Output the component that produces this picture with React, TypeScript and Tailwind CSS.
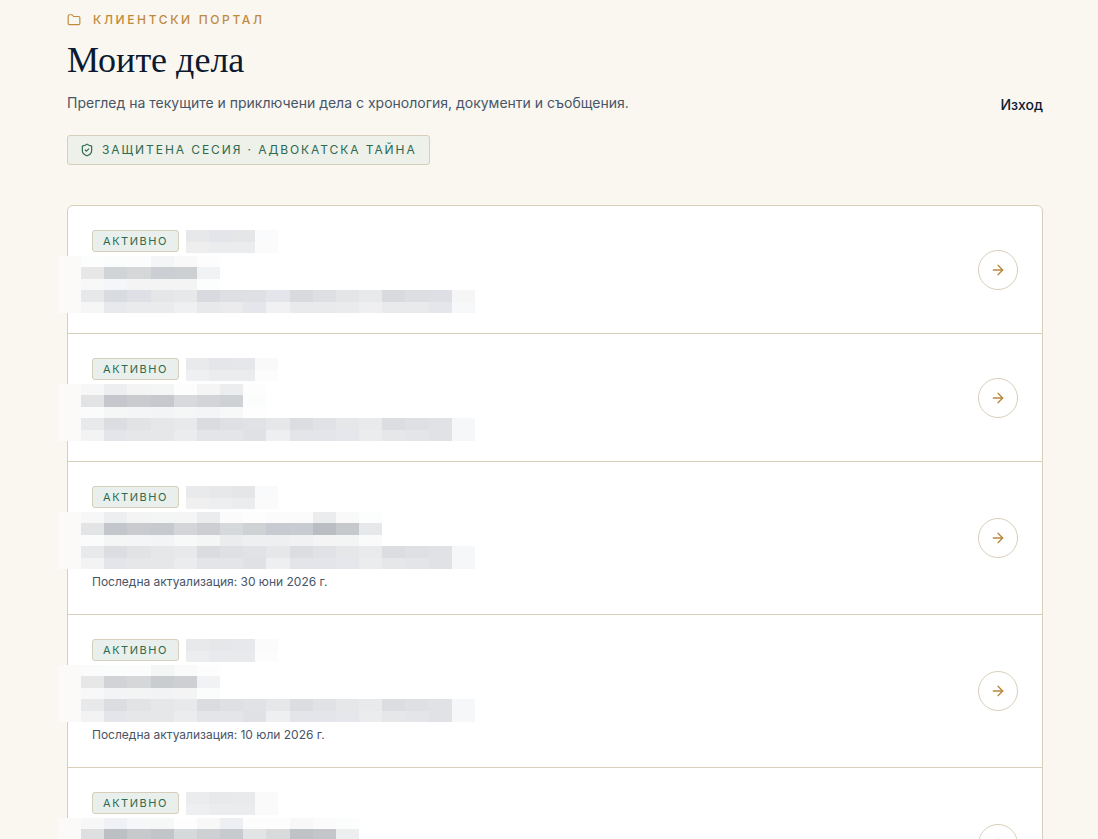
import { ArrowRight, Folder, ShieldCheck } from "lucide-react";

type CaseItem = {
  id: number;
  status: string;
  code: string[];
  title: string[];
  summary: string[];
  updated?: string;
};

// Each string is one row of mosaic cells, left to right.
const summaryRows = [
  "e8e9eb dcdde1 e2e3e5 e6e7e9 e8e9eb dbdce0 dfe0e4 e1e2e6 e6e7e9 dcdde1 e1e2e6 e6e7e8 e9eaec dcdde1 dfe0e4 e1e2e6 f6f7f9",
  "f3f3f3 e4e5ea e6e7e9 e6e7e9 ebecee e4e5e9 e4e5e9 e0e1e5 eeeff1 e4e5e9 e4e5ea e6e7ec ebecee e6e7e8 e4e5e9 e1e2e6 f6f7f9",
];

const cases: CaseItem[] = [
  {
    id: 1,
    status: "АКТИВНО",
    code: ["e7e8ea e4e5ea e5e6e8 fafbfd", "eeeeee ebecee ebecee fbfbfc"],
    title: [
      "fcfdfd fbfdfd fcfcfc f4f5f7 f9f9fa fdfdfd",
      "e7e7e7 d0d4d7 d6d7d9 cbced2 cdd0d3 f1f2f4",
      "f8f8f8 f4f6f9 f4f4f5 f4f4f4 f4f4f4 fcfefe",
    ],
    summary: [
      "e7e8ea d8dce0 dfe0e5 e5e6e8 e7e8ea d9dadf dedfe3 dfe0e4 e4e5ea d9dade dedfe3 e4e5e7 e8e9eb d9dade dddee2 dedfe4 f6f6f6",
      "f6f6f6 e8e9ec eaebed eaebed eff0f2 e8e9eb ebebed e5e6eb f1f1f3 e9eaeb e9eaeb eaebec efeff1 e9eaeb e9eaec e5e6eb f7f8fa",
    ],
  },
  {
    id: 2,
    status: "АКТИВНО",
    code: ["e9eaec e5e6ea e6e7eb f9f9f9", "eff0f2 ebecee ebecee fcfcfc"],
    title: [
      "f7f7f7 edeef0 f4f4f4 f4f6f6 fdfdfd f5f5f5 ecedef fdfdfe",
      "e2e3e5 c5c7cc cacbcf c6c8cd d8d9dd d3d4d8 cfd2d5 fafdfc",
      "fbfbfb f4f7f5 f4f5f7 f3f4f6 f5f7f6 f4f5f7 f7f9f8 fefefe",
    ],
    summary: summaryRows,
  },
  {
    id: 3,
    status: "АКТИВНО",
    code: ["e9eaeb e7e8e9 e5e6e8 f9fafc", "f0f0f0 edeeef ebecee fbfbfb"],
    title: [
      "f7f7f7 edeef0 f4f4f4 f4f6f5 f5f5f6 ebecee fbfbfb fdfdfd fbfbfb fbfbfb ebecee f9f9f9 fcfefe",
      "e2e4e5 c3c7cb cacbcf c6c9ce d4d5d9 cdced2 d5d9dc ced2d5 c7cad0 c8cbd1 babec3 c6c9cc e7e8ea",
      "fbfbfb f4f6f5 f4f5f7 f3f4f6 f7f9f8 f4f6f5 ebecee eeeff1 eeeff1 f1f1f3 f4f4f4 f3f5f4 fafafa",
    ],
    summary: summaryRows,
    updated: "Последна актуализация: 30 юни 2026 г.",
  },
  {
    id: 4,
    status: "АКТИВНО",
    code: ["e8e9eb e6e7e9 e7e8ec fbfbfb", "ecedef e9eaee e9eaec fcfcfc"],
    title: [
      "fbfbfc fafdfc fcfcfc f4f6f5 fafafb fdfdfd",
      "e7e7e7 d2d3d7 d6d7d9 cacdd0 cecfd3 f1f2f4",
      "f8f8f8 f3f4f6 f3f4f4 f2f3f5 f4f4f4 fbfdfd",
    ],
    summary: summaryRows,
    updated: "Последна актуализация: 10 юли 2026 г.",
  },
  {
    id: 5,
    status: "АКТИВНО",
    code: ["ebecee e8e9eb e9eaec fafafa", "eeeff1 ebecee ebecee fafafa"],
    title: [
      "f7f7f8 f0f1f4 f6f7f8 f6f8f7 fefefe f8f8f9 eeeff2 fdfdfd fdfdfe f8f8f9 fbfbfb fcfdfd",
      "dedfe1 bcbfc4 c8c9cd c1c4c9 d5d9dc cfd0d4 c7cacf e3e4e6 d9dadc bfc2c7 c4c6cb edeef0",
      "fbfbfb f4f6f5 f4f5f7 f3f4f6 f7f9f8 f4f6f5 ebecee eeeff1 f1f1f3 f4f4f4 f3f5f4 fafafa",
    ],
    summary: summaryRows,
    updated: "",
  },
];

function Cells({ row, total }: { row: string; total: number }) {
  const cells = row.split(" ");
  return (
    <>
      {Array.from({ length: total }, (_, i) => (
        <span key={i} style={{ backgroundColor: cells[i] ? `#${cells[i]}` : undefined }} />
      ))}
    </>
  );
}

function CaseCode({ rows }: { rows: string[] }) {
  return (
    <span aria-hidden className="grid h-[23px] w-[92px] grid-cols-4 grid-rows-2">
      {rows.map((row, i) => (
        <Cells key={i} row={row} total={4} />
      ))}
    </span>
  );
}

function CaseMosaic({ rows }: { rows: string[] }) {
  return (
    <div aria-hidden className="-mb-1 -ml-[34px] mt-1 flex h-[57px] w-[417px]">
      <span className="w-[23px] shrink-0 bg-[#fbfaf8]" />
      <div className="grid flex-1 grid-cols-17 grid-rows-5">
        {rows.map((row, i) => (
          <Cells key={i} row={row} total={17} />
        ))}
      </div>
    </div>
  );
}

function CaseRow({ item }: { item: CaseItem }) {
  return (
    <li className="border-b border-[#d8cfba] last:border-b-0">
      <a href={`#case-${item.id}`} className="flex items-center justify-between gap-6 p-6">
        <div className="min-w-0">
          <div className="flex h-[22px] items-start gap-[7px]">
            <span className="flex h-[22px] items-center rounded-[3px] border border-[#d8cfba] bg-[#e9efec] px-[10px] text-[11px] tracking-[0.14em] text-[#2d6a4f]">
              {item.status}
            </span>
            <CaseCode rows={item.code} />
          </div>
          <CaseMosaic rows={[...item.title, ...item.summary]} />
          {item.updated !== undefined && (
            <p className="mt-2 min-h-[17px] text-xs leading-[17px] text-[#475569]">
              {item.updated}
            </p>
          )}
        </div>
        <span className="flex size-10 shrink-0 items-center justify-center rounded-full border border-[#d8cfba] text-[#b8863b]">
          <ArrowRight size={16} strokeWidth={2} />
        </span>
      </a>
    </li>
  );
}

export default function App() {
  return (
    <main
      lang="bg"
      className="min-h-screen bg-[#faf7f0] pl-[67px] pr-[55px] pt-[10px] font-['Inter',sans-serif] text-[#0b1a30]"
    >
      <header>
        <div className="flex items-end justify-between gap-6">
          <div>
            <p className="flex items-center gap-3 text-xs leading-5 font-medium tracking-[0.22em] text-[#c08a3e]">
              <Folder size={14} strokeWidth={2} />
              КЛИЕНТСКИ ПОРТАЛ
            </p>
            <h1 className="mt-2 font-['Liberation_Serif',serif] text-4xl leading-[45px] font-medium">
              Моите дела
            </h1>
            <p className="mt-2 text-sm leading-6 text-[#475569]">
              Преглед на текущите и приключени дела с хронология, документи и съобщения.
            </p>
          </div>
          <button type="button" className="text-sm font-medium">
            Изход
          </button>
        </div>
        <p className="mt-5 inline-flex h-[30px] items-center gap-2 rounded-[3px] border border-[#d8cfba] bg-[#eef0ea] px-3 text-xs tracking-[0.16em] text-[#2d6a4f]">
          <ShieldCheck size={14} strokeWidth={2} />
          ЗАЩИТЕНА СЕСИЯ · АДВОКАТСКА ТАЙНА
        </p>
      </header>

      <ul className="mt-10 rounded-md border border-[#d8cfba] bg-white">
        {cases.map((item) => (
          <CaseRow key={item.id} item={item} />
        ))}
      </ul>
    </main>
  );
}
